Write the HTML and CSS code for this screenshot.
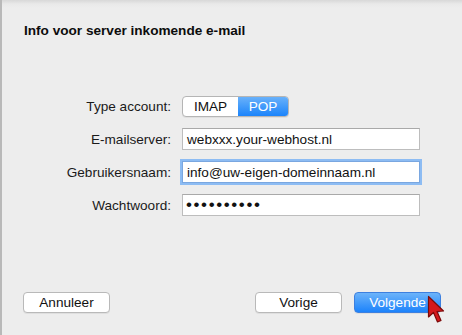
FILE: index.html
```html
<!DOCTYPE html>
<html lang="nl">
<head>
<meta charset="utf-8">
<title>Info voor server inkomende e-mail</title>
<link rel="stylesheet" href="styles.css">
</head>
<body>
<div class="window">
  <h1 class="title">Info voor server inkomende e-mail</h1>
  <div class="form">
    <div class="label">Type account:</div>
    <div class="control">
      <div class="segmented">
        <span class="seg">IMAP</span>
        <span class="seg seg-on">POP</span>
      </div>
    </div>
    <div class="label">E-mailserver:</div>
    <div class="control"><div class="field">webxxx.your-webhost.nl</div></div>
    <div class="label">Gebruikersnaam:</div>
    <div class="control"><div class="field field-focus">info@uw-eigen-domeinnaam.nl</div></div>
    <div class="label">Wachtwoord:</div>
    <div class="control"><div class="field field-pass">••••••••••</div></div>
  </div>
  <div class="footer">
    <button class="btn">Annuleer</button>
    <div class="spacer"></div>
    <button class="btn">Vorige</button>
    <button class="btn btn-primary">Volgende</button>
  </div>
  <svg class="cursor" width="18" height="32" viewBox="0 0 18 32">
    <path d="M1.5 1.5 L1.5 22 L6.5 17.5 L10.5 27 L14 25.5 L10 16.5 L16.5 16 Z" fill="#d4191c" stroke="#7a0a0a" stroke-width="1.2" stroke-linejoin="round"/>
  </svg>
</div>
</body>
</html>
```

FILE: styles.css
```css
* { box-sizing: border-box; }
html, body { margin: 0; padding: 0; }
body {
  width: 462px;
  height: 335px;
  overflow: hidden;
  background: #ececec;
  font-family: "Liberation Sans", Arial, sans-serif;
  color: #111;
}
.window {
  position: relative;
  height: 335px;
  display: flex;
  flex-direction: column;
  border-left: 2px solid #b9b9b9;
  background:
    linear-gradient(to bottom, #d8d8d8 0px, #e9e9e9 4px, #ededed 8px, #ededed 100%);
}
.title {
  margin: 24px 0 0 22px;
  font-size: 13.6px;
  font-weight: bold;
  line-height: 14px;
  color: #0c0c0c;
}
.form {
  margin-top: 58px;
  display: grid;
  grid-template-columns: 169px 240px;
  column-gap: 11px;
  row-gap: 11px;
  align-items: center;
}
.label {
  text-align: right;
  font-size: 13.6px;
  color: #1a1a1a;
}
.control { display: flex; }
.segmented {
  display: flex;
  height: 21px;
  border: 1px solid #b5b5b5;
  border-radius: 4px;
  overflow: hidden;
  background: #fff;
  box-shadow: 0 1px 0 rgba(0,0,0,0.05);
}
.seg {
  display: flex;
  align-items: center;
  justify-content: center;
  font-size: 13.6px;
  color: #111;
  width: 55px;
}
.seg-on {
  width: 50px;
  color: #fff;
  background: linear-gradient(to bottom, #69b1fa, #1b84fb);
}
.field {
  width: 238px;
  height: 22px;
  background: #fff;
  border: 1px solid #bdbdbd;
  border-top-color: #a9a9a9;
  padding: 0 0 0 4px;
  display: flex;
  align-items: center;
  font-size: 13.6px;
  color: #111;
}
.field-focus {
  border-color: #7aa7e0;
  box-shadow: 0 0 0 2px #8dbcf3;
  margin-left: 0;
}
.field-pass {
  font-size: 17px;
  letter-spacing: 1.6px;
  padding-left: 3px;
}
.footer {
  margin-top: auto;
  margin-bottom: 22px;
  display: flex;
  align-items: center;
  padding: 0 21px 0 21px;
  gap: 12px;
}
.spacer { flex: 1; }
.btn {
  width: 87px;
  height: 21px;
  font-family: inherit;
  font-size: 13.6px;
  color: #111;
  background: #fff;
  border: 1px solid #b9b9b9;
  border-radius: 4px;
  padding: 0;
  box-shadow: 0 1px 0 rgba(0,0,0,0.06);
}
.btn-primary {
  color: #fff;
  background: linear-gradient(to bottom, #6cb3fa, #1c83fb);
  border-color: #3d80df;
}
.cursor {
  position: absolute;
  left: 425px;
  top: 295px;
}
```
